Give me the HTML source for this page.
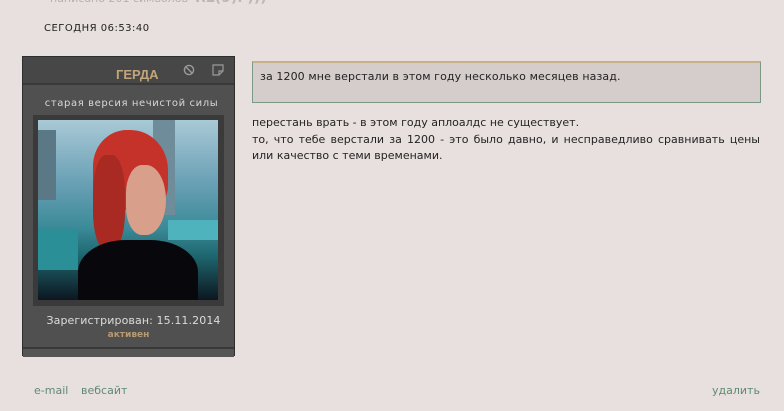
<!DOCTYPE html>
<html><head><meta charset="utf-8"><style>
body{margin:0;width:784px;height:411px;background:#e8e0df;font-family:Verdana,"DejaVu Sans","Liberation Sans",sans-serif;position:relative;overflow:hidden}
.a{position:absolute}
</style></head><body>
<div class="a" style="left:50px;top:-8px;font-size:11px;color:#b8aeae">написано 201 символов</div>
<div class="a" style="left:195px;top:-10px;font-size:14px;font-weight:bold;color:#c0b6b6">RL(9). )))</div>
<div class="a" style="left:44px;top:23px;font-size:10px;color:#222;letter-spacing:0.5px">СЕГОДНЯ 06:53:40</div>

<div class="a" style="left:22px;top:56px;width:211px;height:298px;background:#505050;border:1px solid #2e2e2e">
 <div class="a" style="left:0;top:0;width:211px;height:26px;background:#474747;border-bottom:2px solid #393939"></div>
 <div class="a" style="left:93px;top:10px;font-size:13px;font-weight:bold;color:#c2a57c;font-family:'Liberation Sans',sans-serif">ГЕРДА</div>
 <svg class="a" style="left:160px;top:7px" width="12" height="12" viewBox="0 0 12 12"><circle cx="6" cy="6" r="4.6" fill="none" stroke="#9a9a9a" stroke-width="1.4"/><line x1="3" y1="3" x2="9" y2="9" stroke="#9a9a9a" stroke-width="1.4"/></svg>
 <svg class="a" style="left:189px;top:7px" width="12" height="12" viewBox="0 0 12 12"><path d="M1 1H11V7L7 11H1Z M7 11V7H11" fill="none" stroke="#9a9a9a" stroke-width="1.2"/></svg>
 <div class="a" style="left:0;width:211px;top:41px;text-align:center;font-size:10px;color:#d8d8d8;letter-spacing:0.6px;padding-left:6px;box-sizing:border-box">старая версия нечистой силы</div>
 <div class="a" style="left:10px;top:58px;width:191px;height:191px;background:#3a3a3a">
  <div class="a" style="left:5px;top:5px;width:180px;height:180px;overflow:hidden;background:linear-gradient(180deg,#a9c9d6 0%,#6aa0b5 35%,#3b8a98 60%,#1e6870 75%,#0d1620 100%)">
   <div class="a" style="left:115px;top:0;width:22px;height:95px;background:#6f8c9a"></div>
   <div class="a" style="left:0;top:10px;width:18px;height:70px;background:#5a7886"></div>
   <div class="a" style="left:130px;top:100px;width:50px;height:20px;background:#4fb3bd"></div>
   <div class="a" style="left:0;top:110px;width:40px;height:40px;background:#2a8f96"></div>
   <div class="a" style="left:55px;top:10px;width:75px;height:80px;border-radius:45% 50% 30% 30%;background:#c5322a"></div>
   <div class="a" style="left:88px;top:45px;width:40px;height:70px;border-radius:40% 50% 50% 40%;background:#d8a08a"></div>
   <div class="a" style="left:55px;top:35px;width:32px;height:95px;border-radius:40%;background:#a82a22"></div>
   <div class="a" style="left:40px;top:120px;width:120px;height:80px;border-radius:40% 40% 0 0;background:#08080c"></div>
  </div>
 </div>
 <div class="a" style="left:0;width:211px;top:257px;text-align:center;font-size:11px;color:#dcdcdc;letter-spacing:0.1px;padding-left:10px;box-sizing:border-box">Зарегистрирован: 15.11.2014</div>
 <div class="a" style="left:0;width:211px;top:273px;text-align:center;font-size:9px;font-weight:bold;color:#b89a72">активен</div>
 <div class="a" style="left:0;top:290px;width:211px;height:8px;background:#555;border-top:2px solid #383838"></div>
</div>

<div class="a" style="left:252px;top:61px;width:507px;height:39px;background:#d5cdcc;border:1px solid #7a9a86;border-top:2px solid #c9b08a"></div>
<div class="a" style="left:260px;top:70px;font-size:11px;color:#222;letter-spacing:0.1px">за 1200 мне верстали в этом году несколько месяцев назад.</div>
<div class="a" style="left:252px;top:115px;width:508px;font-size:11px;line-height:16.5px;color:#222;text-align:justify">перестань врать - в этом году аплоалдс не существует.<br>то, что тебе верстали за 1200 - это было давно, и несправедливо сравнивать цены или качество с теми временами.</div>

<div class="a" style="left:34px;top:384px;font-size:11px;color:#5e8a72">e-mail</div>
<div class="a" style="left:81px;top:384px;font-size:11px;color:#5e8a72">вебсайт</div>
<div class="a" style="left:712px;top:384px;font-size:11px;color:#5e8a72">удалить</div>
</body></html>
